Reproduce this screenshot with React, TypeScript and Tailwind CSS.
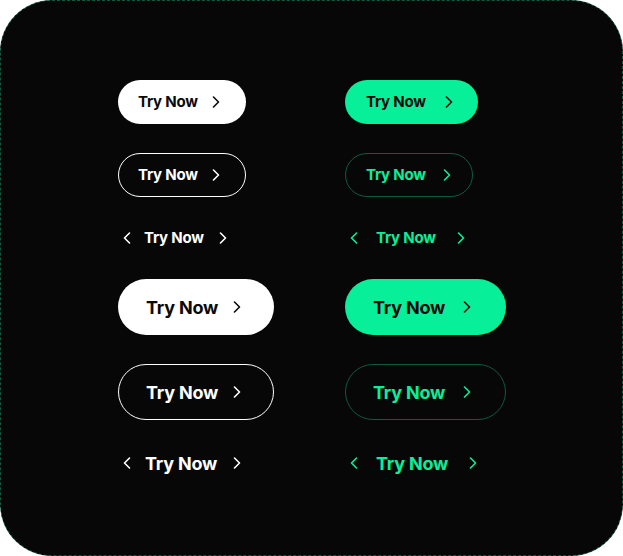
import type { JSX } from "react";

function Chevron({ dir = "right", className = "" }: { dir?: "left" | "right"; className?: string }): JSX.Element {
  return (
    <svg width="8" height="12" viewBox="0 0 8 12" fill="none" className={className}>
      {dir === "right" ? (
        <polyline points="1.5,1 6.5,6 1.5,11" stroke="currentColor" strokeWidth="1.6" strokeLinecap="round" strokeLinejoin="round" />
      ) : (
        <polyline points="6.5,1 1.5,6 6.5,11" stroke="currentColor" strokeWidth="1.6" strokeLinecap="round" strokeLinejoin="round" />
      )}
    </svg>
  );
}

export default function App(): JSX.Element {
  return (
    <div className="w-[623px] h-[556px] bg-white" style={{ fontFamily: "Inter, 'Noto Sans', sans-serif" }}>
      <div className="w-full h-full rounded-[52px] bg-[#070707] border border-dashed border-[#0f5a3d] grid grid-cols-[227px_1fr] pl-[117px] pt-[79px] gap-y-[29px] content-start">
        {/* row 1: filled small */}
        <div>
          <button className="w-[128px] h-[44px] rounded-full bg-white text-[#0a0a0a] font-bold text-[15px] tracking-[-0.2px] flex items-center pl-[20px] gap-[14px]">
            Try Now
            <Chevron />
          </button>
        </div>
        <div>
          <button className="w-[133px] h-[44px] rounded-full bg-[#08ef9a] text-[#0a0a0a] font-bold text-[15px] tracking-[-0.2px] flex items-center pl-[21px] gap-[19px]">
            Try Now
            <Chevron />
          </button>
        </div>

        {/* row 2: outline small */}
        <div>
          <button className="w-[128px] h-[44px] rounded-full border border-white text-white font-bold text-[15px] tracking-[-0.2px] flex items-center pl-[19px] gap-[14px]">
            Try Now
            <Chevron />
          </button>
        </div>
        <div>
          <button className="w-[128px] h-[44px] rounded-full border border-[#0b5c3e] text-[#08ef9a] font-bold text-[15px] tracking-[-0.2px] flex items-center pl-[20px] gap-[17px]">
            Try Now
            <Chevron />
          </button>
        </div>

        {/* row 3: text small */}
        <div className="h-[24px] flex items-center text-white font-bold text-[15px] tracking-[-0.2px] pl-[5px]">
          <Chevron dir="left" />
          <span className="ml-[13px]">Try Now</span>
          <Chevron className="ml-[15px]" />
        </div>
        <div className="h-[24px] flex items-center text-[#08ef9a] font-bold text-[15px] tracking-[-0.2px] pl-[5px]">
          <Chevron dir="left" />
          <span className="ml-[18px]">Try Now</span>
          <Chevron className="ml-[21px]" />
        </div>

        {/* row 4: filled large */}
        <div>
          <button className="w-[156px] h-[56px] rounded-full bg-white text-[#0a0a0a] font-bold text-[18px] tracking-[-0.2px] flex items-center pl-[28px] gap-[15px]">
            Try Now
            <Chevron />
          </button>
        </div>
        <div>
          <button className="w-[161px] h-[56px] rounded-full bg-[#08ef9a] text-[#0a0a0a] font-bold text-[18px] tracking-[-0.2px] flex items-center pl-[28px] gap-[18px]">
            Try Now
            <Chevron />
          </button>
        </div>

        {/* row 5: outline large */}
        <div>
          <button className="w-[156px] h-[56px] rounded-full border border-white text-white font-bold text-[18px] tracking-[-0.2px] flex items-center pl-[27px] gap-[15px]">
            Try Now
            <Chevron />
          </button>
        </div>
        <div>
          <button className="w-[161px] h-[56px] rounded-full border border-[#0b5c3e] text-[#08ef9a] font-bold text-[18px] tracking-[-0.2px] flex items-center pl-[27px] gap-[18px]">
            Try Now
            <Chevron />
          </button>
        </div>

        {/* row 6: text large */}
        <div className="h-[28px] flex items-center text-white font-bold text-[18px] tracking-[-0.2px] pl-[5px]">
          <Chevron dir="left" />
          <span className="ml-[14px]">Try Now</span>
          <Chevron className="ml-[16px]" />
        </div>
        <div className="h-[28px] flex items-center text-[#08ef9a] font-bold text-[18px] tracking-[-0.2px] pl-[5px]">
          <Chevron dir="left" />
          <span className="ml-[18px]">Try Now</span>
          <Chevron className="ml-[21px]" />
        </div>
      </div>
    </div>
  );
}
